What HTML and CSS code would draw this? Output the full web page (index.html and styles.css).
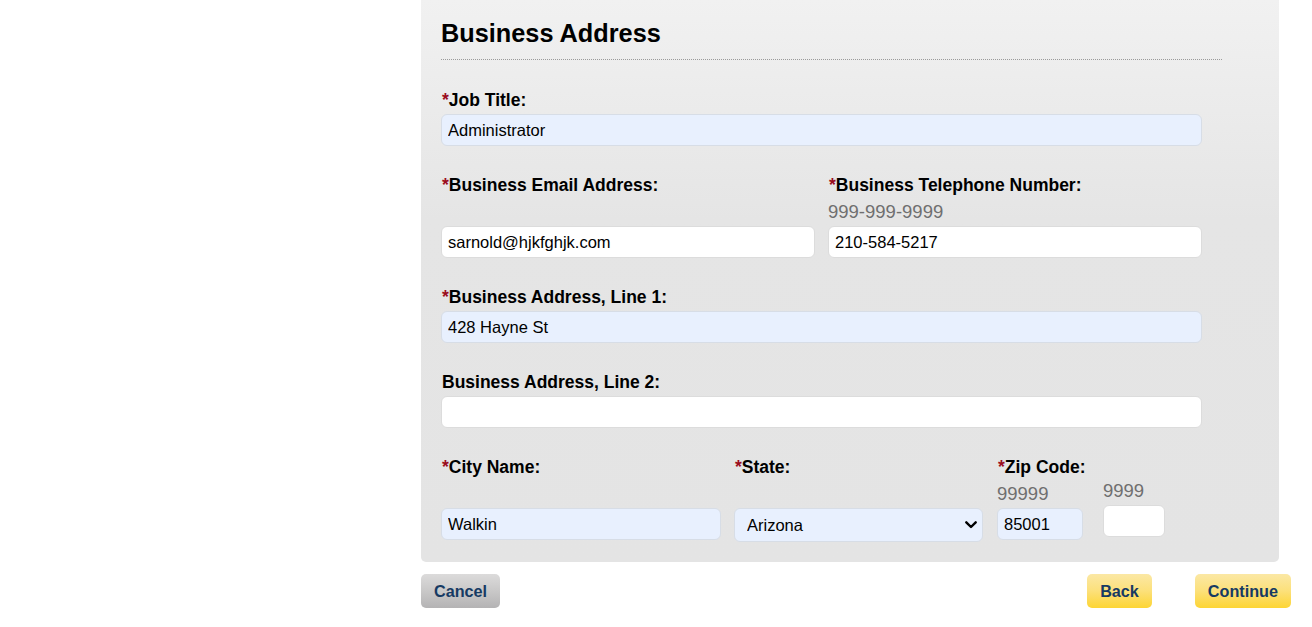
FILE: index.html
```html
<!DOCTYPE html>
<html lang="en">
<head>
<meta charset="utf-8">
<title>Business Address</title>
<link rel="stylesheet" href="styles.css">
</head>
<body>
<div class="page">
  <section class="panel">
    <h2 class="panel-title">Business Address</h2>
    <form class="form">
      <div class="field">
        <label class="label"><span class="req">*</span>Job Title:</label>
        <input class="input autofill full" type="text" value="Administrator">
      </div>

      <div class="row two">
        <div class="col">
          <label class="label"><span class="req">*</span>Business Email Address:</label>
          <div class="hint"></div>
          <input class="input white" type="text" value="sarnold@hjkfghjk.com">
        </div>
        <div class="col">
          <label class="label"><span class="req">*</span>Business Telephone Number:</label>
          <div class="hint">999-999-9999</div>
          <input class="input white" type="text" value="210-584-5217">
        </div>
      </div>

      <div class="field">
        <label class="label"><span class="req">*</span>Business Address, Line 1:</label>
        <input class="input autofill full" type="text" value="428 Hayne St">
      </div>

      <div class="field">
        <label class="label">Business Address, Line 2:</label>
        <input class="input white full" type="text" value="">
      </div>

      <div class="row bottom">
        <div class="col city">
          <label class="label"><span class="req">*</span>City Name:</label>
          <div class="hint"></div>
          <input class="input autofill" type="text" value="Walkin">
        </div>
        <div class="col state">
          <label class="label"><span class="req">*</span>State:</label>
          <div class="hint"></div>
          <select class="select autofill">
            <option>Arizona</option>
          </select>
        </div>
        <div class="col zip">
          <label class="label"><span class="req">*</span>Zip Code:</label>
          <div class="hint">99999</div>
          <input class="input autofill" type="text" value="85001">
        </div>
        <div class="col plus4">
          <div class="hint">9999</div>
          <input class="input white short" type="text" value="">
        </div>
      </div>
    </form>
  </section>

  <div class="actions">
    <button class="btn btn-gray" type="button">Cancel</button>
    <div class="actions-right">
      <button class="btn btn-yellow" type="button">Back</button>
      <button class="btn btn-yellow" type="button">Continue</button>
    </div>
  </div>
</div>
</body>
</html>
```

FILE: styles.css
```css
html, body {
  margin: 0;
  padding: 0;
  background: #ffffff;
}

body {
  font-family: "Liberation Sans", Arial, Helvetica, sans-serif;
  color: #000;
}

.page {
  margin-left: 421px;
  width: 870px;
}

.panel {
  width: 858px;
  box-sizing: border-box;
  padding: 18px 0 20px 20px;
  background: linear-gradient(to bottom, #f1f1f1 0px, #e5e5e5 220px, #e4e4e4 100%);
  border-radius: 0 0 5px 5px;
}

.panel-title {
  margin: 0;
  width: 781px;
  font-size: 25.3px;
  line-height: 30px;
  font-weight: bold;
  padding-bottom: 11px;
  border-bottom: 1px dotted #9a9a9a;
}

.form {
  width: 761px;
  margin-top: 30px;
  display: flex;
  flex-direction: column;
  gap: 29px;
}

.field {
  display: flex;
  flex-direction: column;
}

.label {
  display: block;
  font-size: 17.5px;
  line-height: 20px;
  font-weight: bold;
  margin-bottom: 4px;
  padding-left: 1px;
  white-space: nowrap;
}

.req {
  color: #9b0d1e;
  font-weight: bold;
}

.hint {
  height: 24px;
  line-height: 24px;
  font-size: 18.5px;
  color: #6f6f6f;
  margin-top: 1px;
  margin-bottom: 2px;
}

.input,
.select {
  box-sizing: border-box;
  height: 32px;
  margin: 0;
  padding: 0 6px;
  font-family: "Liberation Sans", Arial, Helvetica, sans-serif;
  font-size: 16.5px;
  color: #000;
  border-radius: 6px;
  outline: none;
}

.input.autofill,
.select.autofill {
  background-color: #e8f0fe;
  border: 1px solid #d7dde6;
}

.input.white {
  background-color: #ffffff;
  border: 1px solid #dcdcdc;
}

.full {
  width: 761px;
}

.row {
  display: flex;
}

.col {
  display: flex;
  flex-direction: column;
}

.two .col {
  width: 374px;
}

.two .col + .col {
  margin-left: 13px;
}

.two .input {
  width: 374px;
}

.bottom .city {
  width: 280px;
  margin-right: 13px;
}

.bottom .state {
  width: 249px;
  margin-right: 14px;
}

.bottom .zip {
  width: 86px;
  margin-right: 20px;
}

.bottom .plus4 {
  width: 62px;
  padding-top: 21px;
}

.bottom .plus4 .hint {
  margin-bottom: 2px;
}

.bottom .input {
  width: 100%;
}

.select {
  width: 249px;
  height: 34px;
  padding-left: 12px;
  -webkit-appearance: none;
  appearance: none;
  background-image: url("data:image/svg+xml;utf8,<svg xmlns='http://www.w3.org/2000/svg' width='12' height='8' viewBox='0 0 12 8'><path d='M1.3 1.3 L6 6 L10.7 1.3' fill='none' stroke='black' stroke-width='2.4' stroke-linecap='round' stroke-linejoin='round'/></svg>");
  background-repeat: no-repeat;
  background-position: right 5px center;
  background-size: 12px 8px;
}

.actions {
  margin-top: 12px;
  display: flex;
  justify-content: space-between;
}

.actions-right {
  display: flex;
  gap: 43px;
}

.btn {
  height: 34px;
  padding: 0 13px;
  border: none;
  border-radius: 5px;
  font-family: "Liberation Sans", Arial, Helvetica, sans-serif;
  font-size: 16.2px;
  font-weight: bold;
  color: #163a63;
  cursor: pointer;
}

.btn-gray {
  background: linear-gradient(to bottom, #dcdbdb 0%, #c9c8c8 50%, #b4b3b4 100%);
}

.btn-yellow {
  background: linear-gradient(to bottom, #fbe8a5 0%, #fce07a 50%, #fdd534 100%);
}
```
